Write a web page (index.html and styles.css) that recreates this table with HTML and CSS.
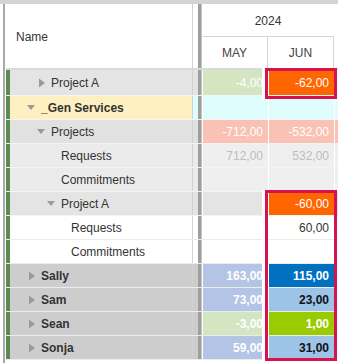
FILE: index.html
```html
<!DOCTYPE html>
<html>
<head>
<meta charset="utf-8">
<link rel="stylesheet" href="styles.css">
</head>
<body>
<div class="wrap">
  <div class="topbar"></div>
  <div class="main">
    <div class="leftline"></div>
    <div class="content">
      <div class="header">
        <div class="hname">Name</div>
        <div class="vline"></div>
        <div class="gap"></div>
        <div class="sep"></div>
        <div class="hvals">
          <div class="year">2024</div>
          <div class="months"><div class="month">MAY</div><div class="month">JUN</div><div class="month"></div></div>
        </div>
      </div>
      <div class="rows">
        <div class="row first r-gray">
          <div class="green"></div>
          <div class="name l1"><svg class="tri" width="14" height="10" viewBox="0 0 14 10"><polygon points="2,0.5 8,5 2,9.5" /></svg>Project A</div>
          <div class="vline"></div><div class="gap"></div><div class="sep"></div>
          <div class="cell c-lgreen">-4,00</div><div class="cell c-orange">-62,00</div><div class="cell"></div>
        </div>
        <div class="row r-yellow bold">
          <div class="green"></div>
          <div class="name l0"><svg class="tri" width="14" height="10" viewBox="0 0 14 10"><polygon points="0,2 8,2 4,7" /></svg>_Gen Services</div>
          <div class="vline"></div><div class="gap cyan"></div><div class="sep"></div>
          <div class="cell cyan"></div><div class="cell cyan"></div><div class="cell cyan"></div>
        </div>
        <div class="row r-gray2">
          <div class="green"></div>
          <div class="name l1"><svg class="tri" width="14" height="10" viewBox="0 0 14 10"><polygon points="0,2 8,2 4,7" /></svg>Projects</div>
          <div class="vline"></div><div class="gap"></div><div class="sep"></div>
          <div class="cell c-salmon">-712,00</div><div class="cell c-salmon">-532,00</div><div class="cell c-salmon"></div>
        </div>
        <div class="row r-gray3">
          <div class="green"></div>
          <div class="name l2">Requests</div>
          <div class="vline"></div><div class="gap"></div><div class="sep"></div>
          <div class="cell c-faint">712,00</div><div class="cell c-faint">532,00</div><div class="cell c-faint"></div>
        </div>
        <div class="row r-gray3">
          <div class="green"></div>
          <div class="name l2">Commitments</div>
          <div class="vline"></div><div class="gap"></div><div class="sep"></div>
          <div class="cell c-faint"></div><div class="cell c-faint"></div><div class="cell c-faint"></div>
        </div>
        <div class="row r-gray">
          <div class="green"></div>
          <div class="name l2"><svg class="tri" width="14" height="10" viewBox="0 0 14 10"><polygon points="0,2 8,2 4,7" /></svg>Project A</div>
          <div class="vline"></div><div class="gap"></div><div class="sep"></div>
          <div class="cell c-rowgray"></div><div class="cell c-orange">-60,00</div><div class="cell c-rowgray"></div>
        </div>
        <div class="row r-white">
          <div class="green"></div>
          <div class="name l3">Requests</div>
          <div class="vline"></div><div class="gap"></div><div class="sep"></div>
          <div class="cell"></div><div class="cell c-dark">60,00</div><div class="cell"></div>
        </div>
        <div class="row r-white">
          <div class="green"></div>
          <div class="name l3">Commitments</div>
          <div class="vline"></div><div class="gap"></div><div class="sep"></div>
          <div class="cell"></div><div class="cell"></div><div class="cell"></div>
        </div>
        <div class="row r-dark bold">
          <div class="green"></div>
          <div class="name l0"><svg class="tri" width="14" height="10" viewBox="0 0 14 10"><polygon points="2,0.5 8,5 2,9.5" /></svg>Sally</div>
          <div class="vline"></div><div class="gap"></div><div class="sep"></div>
          <div class="cell c-lav">163,00</div><div class="cell c-blue">115,00</div><div class="cell"></div>
        </div>
        <div class="row r-dark bold">
          <div class="green"></div>
          <div class="name l0"><svg class="tri" width="14" height="10" viewBox="0 0 14 10"><polygon points="2,0.5 8,5 2,9.5" /></svg>Sam</div>
          <div class="vline"></div><div class="gap"></div><div class="sep"></div>
          <div class="cell c-lav">73,00</div><div class="cell c-sky">23,00</div><div class="cell"></div>
        </div>
        <div class="row r-dark bold">
          <div class="green"></div>
          <div class="name l0"><svg class="tri" width="14" height="10" viewBox="0 0 14 10"><polygon points="2,0.5 8,5 2,9.5" /></svg>Sean</div>
          <div class="vline"></div><div class="gap"></div><div class="sep"></div>
          <div class="cell c-lgreen">-3,00</div><div class="cell c-lime">1,00</div><div class="cell"></div>
        </div>
        <div class="row r-dark bold">
          <div class="green"></div>
          <div class="name l0"><svg class="tri" width="14" height="10" viewBox="0 0 14 10"><polygon points="2,0.5 8,5 2,9.5" /></svg>Sonja</div>
          <div class="vline"></div><div class="gap"></div><div class="sep"></div>
          <div class="cell c-lav">59,00</div><div class="cell c-sky">31,00</div><div class="cell"></div>
        </div>
      </div>
    </div>
  </div>
  <div class="sel sel-1"></div>
  <div class="sel sel-2"></div>
</div>
</body>
</html>
```

FILE: styles.css
```css
* { box-sizing: border-box; }
html, body { margin: 0; padding: 0; background: #fff; }
body { font-family: "Liberation Sans", Arial, sans-serif; font-size: 12px; color: #333; }

.wrap { position: relative; width: 338px; height: 363px; overflow: hidden; background: #fff; }
.topbar { height: 4px; background: #d4d4d4; }
.main { display: flex; height: 359px; }
.leftline { width: 2px; margin-left: 3px; background: #a9a9a9; flex: none; }
.content { flex: 1; margin-left: 1px; display: flex; flex-direction: column; min-width: 0; }

.header { display: flex; height: 66px; border-bottom: 2px solid #d9d9d9; flex: none; }
.hname { width: 186px; flex: none; display: flex; align-items: center; padding-left: 10px; padding-top: 1px; color: #333; }
.vline { width: 1px; flex: none; background: #d2d2d2; }
.gap { width: 5px; flex: none; }
.sep { width: 4px; flex: none; background: #9e9e9e; border-right: 1px solid #c4c4c4; }
.hvals { flex: 1; display: flex; flex-direction: column; }
.year { height: 33px; border-bottom: 1px solid #d6d6d6; display: flex; align-items: center; justify-content: center; width: 132px; color: #333; padding-top: 2px; }
.months { display: flex; flex: 1; }
.month { width: 66px; flex: none; border-right: 1px solid #d6d6d6; display: flex; align-items: center; justify-content: center; color: #444; padding-top: 1px; }
.month:last-child { border-right: none; }

.rows { display: flex; flex-direction: column; }
.row { display: flex; height: 24px; border-bottom: 1px solid #f4f4f4; }
.row.first { height: 26px; }
.green { width: 4px; flex: none; background: #5b8b52; }
.name { width: 182px; flex: none; display: flex; align-items: center; white-space: nowrap; color: #333; }
.bold { font-weight: bold; }
.tri { flex: none; fill: #9a9a9a; }
.name.l0 { padding-left: 17px; }
.name.l1 { padding-left: 27px; }
.name.l2 { padding-left: 51px; }
.name.l2 .tri { margin-left: -14px; }
.name.l3 { padding-left: 61px; }

.cell { width: 66px; flex: none; border-left: 1px solid #fff; display: flex; align-items: center; justify-content: flex-end; padding-right: 5px; color: #fff; }
.cell:last-child { width: 10px; flex: 1; }

.r-gray .name, .r-gray .gap { background: #e4e4e4; }
.r-gray2 .name, .r-gray2 .gap { background: #e1e1e1; }
.r-gray3 .name, .r-gray3 .gap { background: #ebebeb; }
.r-yellow .name { background: #fff0c1; }
.r-dark .name, .r-dark .gap { background: #cdcdcd; }
.r-white .name { background: #fff; }
.r-white { border-bottom-color: #ececec; }
.r-dark { border-bottom-color: #ececec; }

.cyan { background: #e0fdfd; }
.c-lgreen { background: #d3e6c1; }
.c-orange { background: #ff6600; }
.c-salmon { background: #f9c2b5; }
.c-faint { background: #efefef; color: #bdbdbd; }
.c-rowgray { background: #e4e4e4; }
.c-dark { color: #333; }
.c-lav { background: #b4c4e4; }
.c-blue { background: #0070c0; }
.c-sky { background: #9dc3e6; color: #111; }
.c-lime { background: #99cc00; }

.sel { position: absolute; border: 3px solid #d6124f; box-shadow: -3px 0 0 0 #fff; }
.sel-1 { left: 265px; top: 68px; width: 72px; height: 31px; }
.sel-2 { left: 265px; top: 190px; width: 72px; height: 171px; }
```
